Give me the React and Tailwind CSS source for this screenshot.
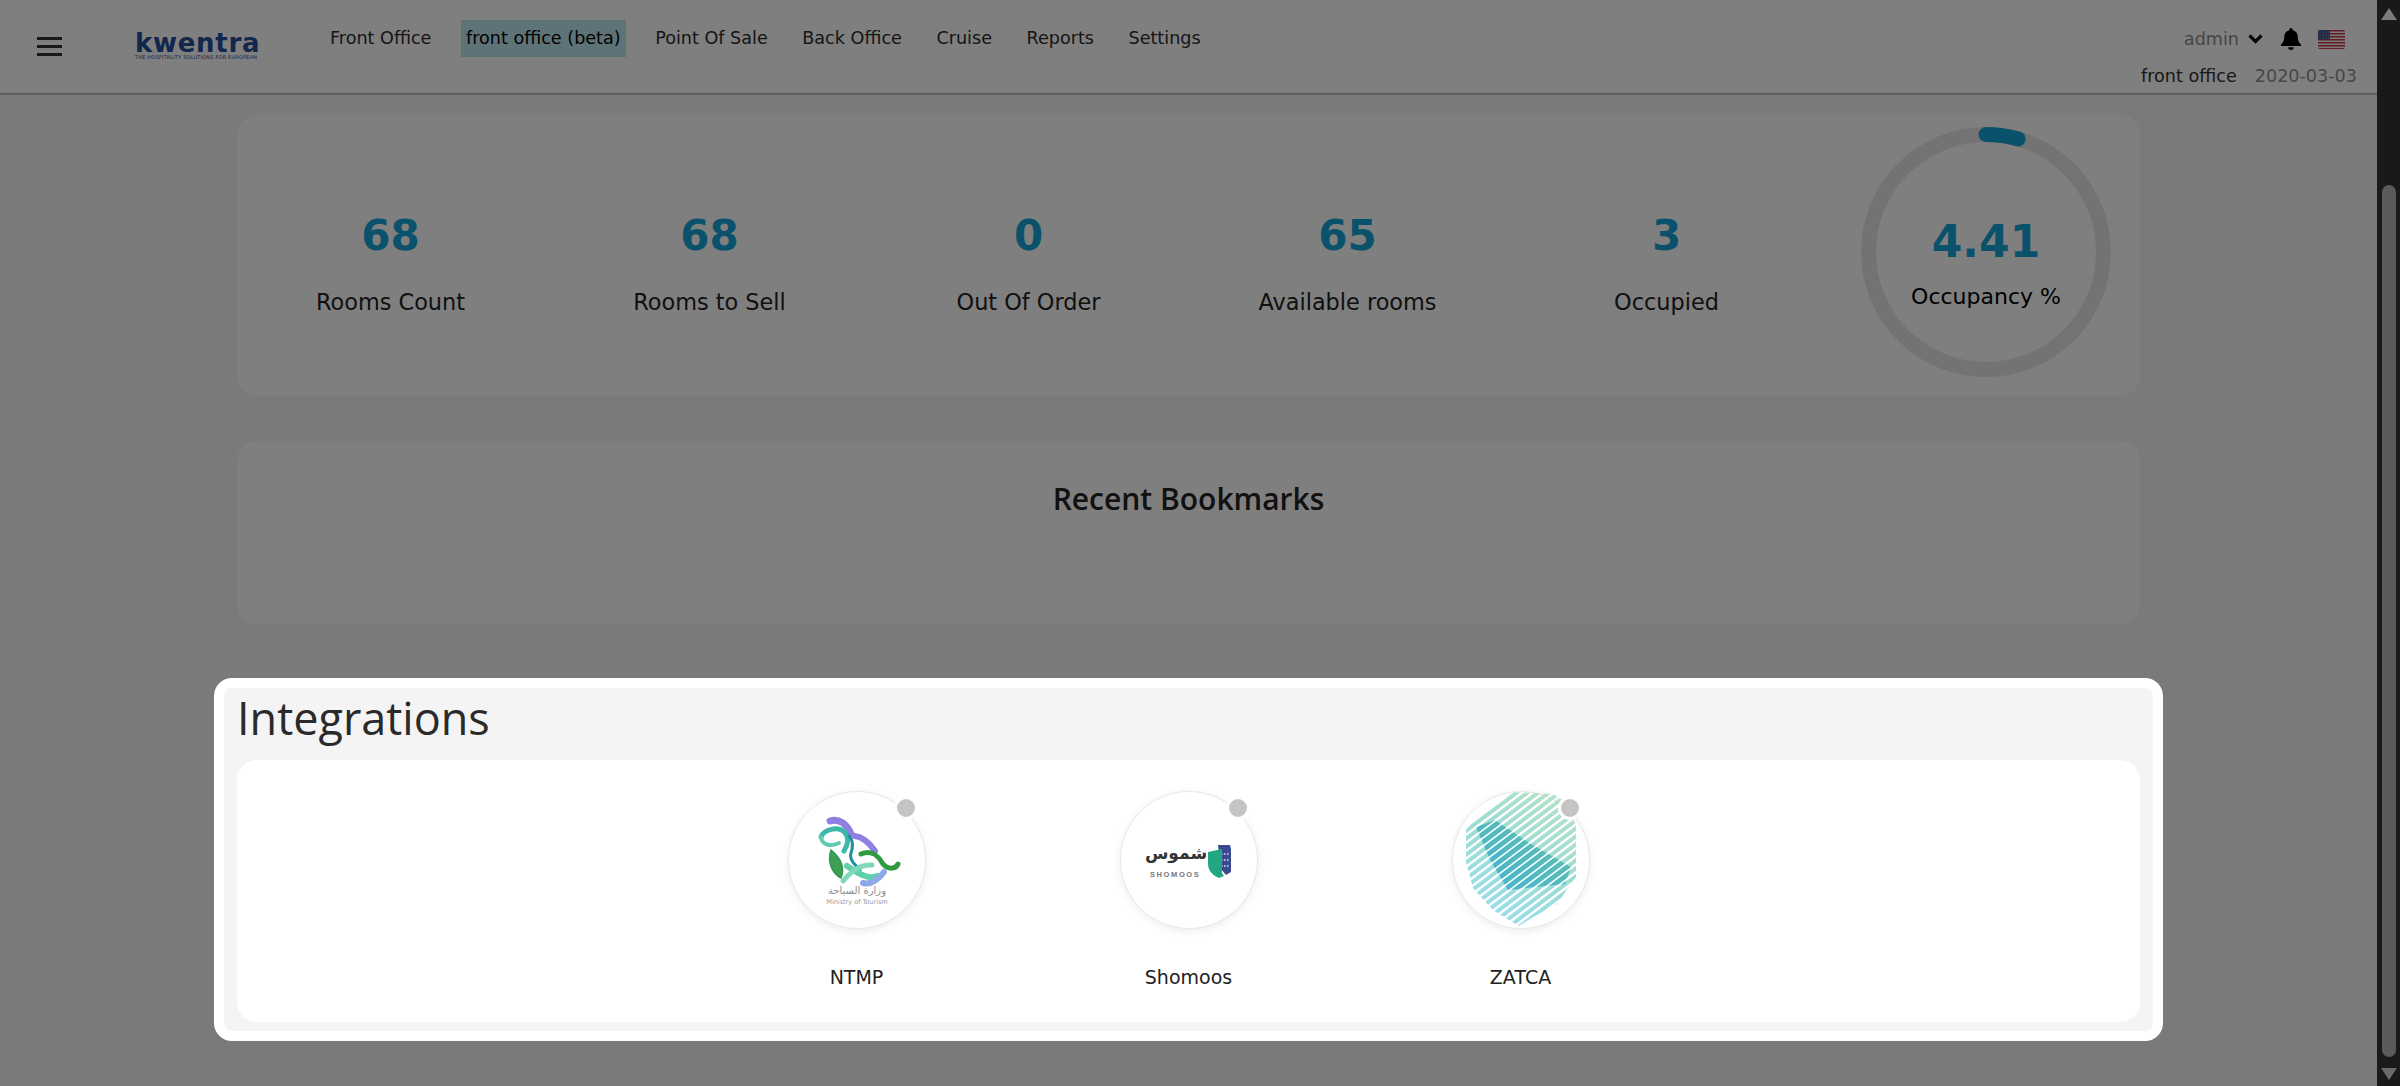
const font = { fontFamily: '"DejaVu Sans", sans-serif' }

const navItems = ['Front Office', 'front office (beta)', 'Point Of Sale', 'Back Office', 'Cruise', 'Reports', 'Settings']

const stats = [
  { value: '68', label: 'Rooms Count' },
  { value: '68', label: 'Rooms to Sell' },
  { value: '0', label: 'Out Of Order' },
  { value: '65', label: 'Available rooms' },
  { value: '3', label: 'Occupied' }
]

const Flag = () => (
  <svg width="27" height="19" viewBox="0 0 27 19" className="rounded-[2px]">
    <rect width="27" height="19" fill="#f4f4f4" />
    {[0, 3, 6, 9, 12, 15, 18].map((y) => (
      <rect key={y} y={y} width="27" height="1.5" fill="#c8384a" />
    ))}
    <rect width="12" height="9.5" fill="#40508f" />
    {[2, 5, 8, 11].map((x) =>
      [2, 5, 8].map((y) => <circle key={`${x}-${y}`} cx={x} cy={y} r="0.6" fill="#dfe3f0" />)
    )}
  </svg>
)

const Navbar = () => (
  <header className="h-[95px] shrink-0 bg-white border-b-2 border-[#bdbdbd] flex justify-between pl-[37px] pr-[16px]" style={font}>
    <div className="flex items-start">
      <div className="mt-[37px] w-[25px] flex flex-col gap-[5px]">
        <span className="h-[3px] bg-[#333]" />
        <span className="h-[3px] bg-[#333]" />
        <span className="h-[3px] bg-[#333]" />
      </div>
      <div className="ml-[73px] mt-[30px] w-[130px] leading-none relative">
        <div className="text-[26px] font-bold text-[#234e96] tracking-[0.7px]">kwentra</div>
        <div className="text-[5px] text-[#234e96] tracking-[0.2px] whitespace-nowrap -mt-[1px]">THE HOSPITALITY SOLUTIONS FOR EUROPEAN</div>
      </div>
      <nav className="ml-[65px] mt-[20px] flex items-center gap-[34.5px] text-[17.6px] text-[#2b2b2b]">
        {navItems.map((item) => (
          <span key={item} className={item.includes('beta') ? 'h-[37px] flex items-center px-[5px] -mx-[5px] bg-[#bde6f0] text-black' : ''}>
            {item}
          </span>
        ))}
      </nav>
    </div>
    <div className="flex flex-col items-end">
      <div className="mt-[27px] h-[24px] flex items-center">
        <span className="text-[17.6px] text-[#8a8a8a]">admin</span>
        <svg width="15" height="10" viewBox="0 0 15 10" className="ml-[9px]" fill="none" stroke="#111" strokeWidth="3.2">
          <path d="M1.5 1.5 7.5 7.5 13.5 1.5" />
        </svg>
        <svg width="20" height="22" viewBox="0 0 20 22" className="ml-[18px]" fill="#000">
          <path d="M10 0a1.7 1.7 0 0 0-1.7 1.7v.6C5 3 3.2 5.6 3.2 9c0 4-1.2 5.4-3.2 7.6V18h20v-1.4C18 14.400 16.800 13 16.800 9c0-3.400-1.800-6-5.100-6.700v-.6A1.700 1.700 0 0 0 10 0ZM7.200 19.200a2.800 2.800 0 0 0 5.600 0Z" />
        </svg>
        <span className="ml-[17px] mr-[16px] flex"><Flag /></span>
      </div>
      <div className="mt-[12px] flex items-center gap-[18px] text-[17.6px] pr-[4px]">
        <span className="text-[#333]">front office</span>
        <span className="text-[#8f8f8f]">2020-03-03</span>
      </div>
    </div>
  </header>
)

const OccupancyRing = () => {
  const r = 117.5
  const c = 2 * Math.PI * r
  return (
    <div className="relative w-[250px] h-[250px] shrink-0 mb-[7px]">
      <svg width="250" height="250" viewBox="0 0 250 250" className="-rotate-90">
        <circle cx="125" cy="125" r={r} fill="none" stroke="#e6e6e6" strokeWidth="15" />
        <circle cx="125" cy="125" r={r} fill="none" stroke="#14a3d6" strokeWidth="15" strokeLinecap="round" strokeDasharray={`${c * 0.0441} ${c}`} />
      </svg>
      <div className="absolute inset-0 flex flex-col items-center pt-[87px]">
        <div className="text-[44px] leading-[56px] font-bold text-[#14a3d6]">4.41</div>
        <div className="mt-[13px] text-[22px] leading-[28px] text-black">Occupancy %</div>
      </div>
    </div>
  )
}

const NtmpLogo = () => (
  <svg viewBox="0 0 136 136" className="w-full h-full" fill="none" strokeLinecap="round">
    <path d="M41 29c9-3 17 3 21 13" stroke="#8f7fe0" strokeWidth="7" />
    <path d="M66 44c9 1 15 8 20 15" stroke="#8f7fe0" strokeWidth="6" />
    <path d="M32 45c3-8 19-12 25-3 4 6 1 12-2 17" stroke="#3bb8a8" strokeWidth="5" />
    <path d="M32 45c1 8 9 10 18 6" stroke="#62cbb4" strokeWidth="4" />
    <path d="M42 58c-4 12 1 23 10 28 4-11 0-20-10-28Z" fill="#3f9f55" stroke="#2f9950" strokeWidth="1.5" />
    <path d="M60 44c5 5 4 11 2 17-2 6 3 11 9 17" stroke="#1f8fa0" strokeWidth="3" />
    <path d="M58 74c12 8 22 14 30 10" stroke="#5fd0a8" strokeWidth="6" />
    <path d="M72 62c12-5 18 3 22 10 5 6 13 5 15 0" stroke="#2f9a3f" strokeWidth="5" />
    <path d="M54 89c8-9 16-17 29-16" stroke="#7fd8b8" strokeWidth="5" />
    <path d="M74 91c8 2 15-3 21-11" stroke="#8fa8ea" strokeWidth="6" />
    <text x="68" y="102" textAnchor="middle" fontSize="10" fill="#8a8a8a" stroke="none" style={font}>وزارة السياحة</text>
    <text x="68" y="112" textAnchor="middle" fontSize="6.500" fill="#9a9a9a" stroke="none" style={font}>Ministry of Tourism</text>
  </svg>
)

const ShomoosLogo = () => (
  <svg viewBox="0 0 136 136" className="w-full h-full">
    <text x="55" y="67" textAnchor="middle" fontSize="17" fontWeight="700" fill="#333" style={font}>شموس</text>
    <text x="29" y="85" fontSize="7.500" fontWeight="700" fill="#777" letterSpacing="1.600" style={{ fontFamily: '"Liberation Sans", sans-serif' }}>SHOMOOS</text>
    <path d="M97 53h12l1 4v23l-5 3-5-6Z" fill="#3a4a90" />
    <path d="M100 62h8M100 68h8M100 74h8" stroke="#d6dcf0" strokeWidth="1.500" strokeDasharray="1.500 1.500" />
    <path d="M87 60l14-3v24l2 3-5 2c-7-3-11-8-11-14Z" fill="#23a783" />
  </svg>
)

const zatcaLines = Array.from({ length: 26 }, (_, i) => -34 + i * 8)

const ZatcaLogo = () => (
  <svg viewBox="0 0 136 136" className="w-full h-full">
    <defs>
      <clipPath id="zatca-outer">
        <path d="M58 0 100 2 116 12 123 35 123 85 112 100 105 112 80 125 66 134 40 118 20 96 13 70 13 38 35 12Z" />
      </clipPath>
      <clipPath id="zatca-land">
        <path d="M23 35 42 28 78 52 118 75 112 92 55 98 37 68Z" />
      </clipPath>
      <linearGradient id="zatca-pale" gradientUnits="userSpaceOnUse" x1="120" y1="10" x2="40" y2="130">
        <stop offset="0" stopColor="#b5e2c8" />
        <stop offset="0.5" stopColor="#9cdcd4" />
        <stop offset="1" stopColor="#9adcec" />
      </linearGradient>
      <linearGradient id="zatca-land-fill" gradientUnits="userSpaceOnUse" x1="110" y1="40" x2="50" y2="110">
        <stop offset="0" stopColor="#5ec0b0" />
        <stop offset="1" stopColor="#45b4d0" />
      </linearGradient>
    </defs>
    <g clipPath="url(#zatca-outer)">
      {zatcaLines.map((y) => (
        <line key={y} x1="-10" y1={y + 90} x2="150" y2={y - 30} stroke="url(#zatca-pale)" strokeWidth="4" />
      ))}
    </g>
    <g clipPath="url(#zatca-land)">
      {zatcaLines.map((y) => (
        <line key={y} x1="-10" y1={y + 90} x2="150" y2={y - 30} stroke="url(#zatca-land-fill)" strokeWidth="4.800" />
      ))}
    </g>
  </svg>
)

const integrations = [
  { name: 'NTMP', Logo: NtmpLogo },
  { name: 'Shomoos', Logo: ShomoosLogo },
  { name: 'ZATCA', Logo: ZatcaLogo }
]

const Integration = ({ name, Logo }) => (
  <div className="w-[332px] flex flex-col items-center">
    <div className="relative w-[138px] h-[138px] rounded-full bg-white border border-[#e8e8e8] shadow-[0_2px_8px_rgba(0,0,0,0.08)]">
      <Logo />
      <span className="absolute right-[7px] top-[4px] w-[24px] h-[24px] rounded-full bg-[#c4c4c4] border-[3px] border-white" />
    </div>
    <div className="mt-[36px] text-[19px] leading-[24px] text-[#222]" style={font}>{name}</div>
  </div>
)

const Scrollbar = () => (
  <div className="relative z-20 w-[23px] shrink-0 bg-[#191919] flex flex-col items-center">
    <svg width="16" height="12" viewBox="0 0 16 12" className="mt-[8px]" fill="#7a7a7a"><path d="M8 0l8 12H0Z" /></svg>
    <div className="mt-[165px] w-[14px] h-[872px] rounded-full bg-[#5a5a5a]" />
    <svg width="16" height="12" viewBox="0 0 16 12" className="mt-[11px]" fill="#6a6a6a"><path d="M8 12 16 0H0Z" /></svg>
  </div>
)

export default function App() {
  return (
    <div className="h-[1086px] w-[2400px] flex overflow-hidden bg-[#f4f4f4]" style={font}>
      <main className="flex-1 flex flex-col min-w-0">
        <Navbar />
        <section className="mx-[237px] mt-[20px] h-[281px] rounded-[20px] bg-white flex items-center justify-between pr-[29px]">
          <div className="w-[1595px] -ml-[6px] mt-[12px] grid grid-cols-5">
            {stats.map((s) => (
              <div key={s.label} className="flex flex-col items-center text-center">
                <div className="text-[42px] leading-[56px] font-bold text-[#14a3d6]">{s.value}</div>
                <div className="mt-[24px] text-[22.4px] leading-[28px] text-[#222]">{s.label}</div>
              </div>
            ))}
          </div>
          <OccupancyRing />
        </section>
        <section className="mx-[237px] mt-[45px] h-[183px] rounded-[20px] bg-white flex justify-center pt-[40px]">
          <h2 className="text-[30px] leading-[36px] font-semibold text-[#222]" style={{ fontFamily: '"Open Sans", sans-serif' }}>Recent Bookmarks</h2>
        </section>
        <div className="relative z-10 mx-[214px] mt-[54px] rounded-[18px] bg-white p-[10px] shadow-[0_0_0_3000px_rgba(0,0,0,0.5)]">
          <div className="rounded-[8px] bg-[#f4f4f4] px-[13px] pb-[9px]">
            <h1 className="h-[72px] text-[45px] leading-[59px] text-[#2a2a2a] font-normal" style={{ fontFamily: '"Open Sans", sans-serif' }}>Integrations</h1>
            <div className="h-[262px] rounded-[20px] bg-white flex justify-center pt-[31px]">
              {integrations.map((item) => <Integration key={item.name} {...item} />)}
            </div>
          </div>
        </div>
      </main>
      <Scrollbar />
    </div>
  )
}
